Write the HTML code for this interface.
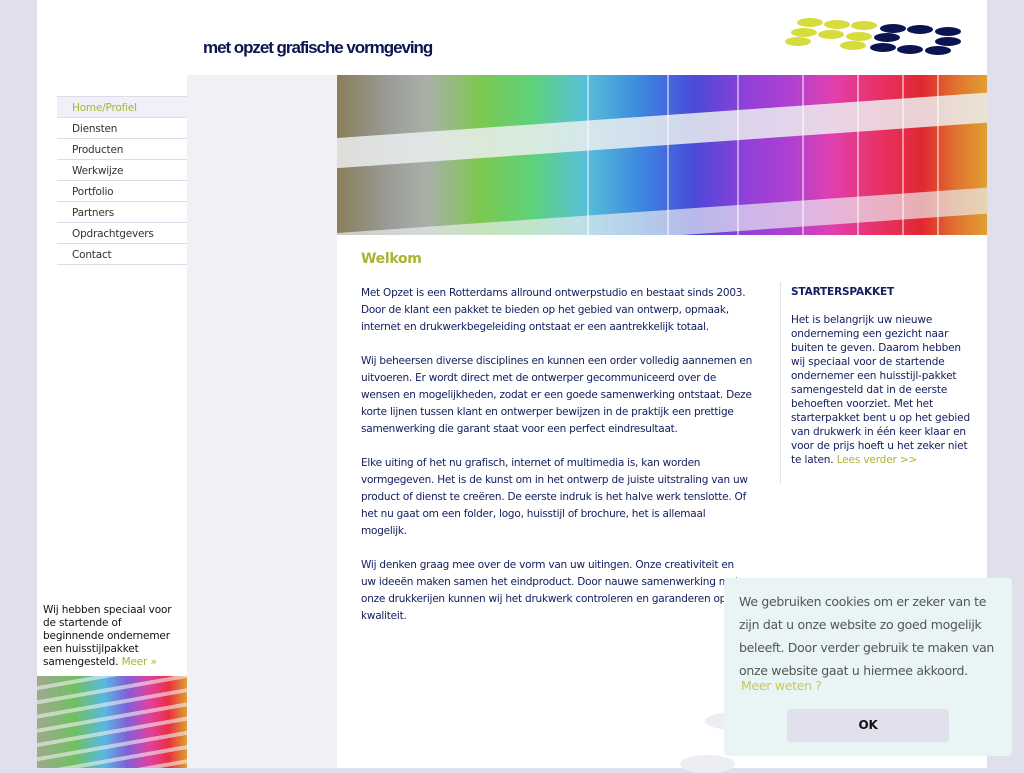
<!DOCTYPE html>
<html><head><meta charset="utf-8"><style>
*{margin:0;padding:0;box-sizing:border-box}
body{width:1024px;height:768px;overflow:hidden;background:#dfe0ec;font-family:"DejaVu Sans",Verdana,sans-serif;position:relative}
#page{position:absolute;left:37px;top:0;width:950px;height:768px;background:#fff}
.abs{position:absolute}
#tag{left:203px;top:38px;font-family:"Liberation Sans",sans-serif;font-weight:bold;font-size:17px;color:#0d1450;letter-spacing:-1.05px}
.dot{position:absolute;width:26px;height:9px;border-radius:50%}
.y{background:#d6dc3c}.n{background:#0a1450}
#mid{left:187px;top:75px;width:150px;height:693px;background:#f0f1f7}
#nav{left:57px;top:96px;width:130px;border-top:1px solid #dcdcea}
#nav div{height:21px;border-bottom:1px solid #dcdcea;font-size:10.5px;line-height:22px;padding-left:15px;color:#333;letter-spacing:-0.2px}
#nav div.on{background:#f0f1f7;color:#a8b434}
#hero{left:337px;top:75px;width:650px;height:160px;overflow:hidden;background:linear-gradient(90deg,#8a7d58 0%,#9a9c98 8%,#aab0a8 14%,#7cc850 22%,#5ed27a 30%,#58c0d8 38%,#3d86e0 47%,#4a4ad8 55%,#9040d8 63%,#b040d0 70%,#e040b0 76%,#e83060 84%,#e02830 90%,#e07030 95%,#e0a030 100%)}
.band{position:absolute;left:-20px;width:700px;background:rgba(235,238,240,.85);transform:rotate(-4deg)}
#hero .s{position:absolute;top:0;height:160px;width:2px;background:rgba(255,255,255,.5)}
h1{position:absolute;left:361px;top:251px;font-size:14px;color:#a8b434;font-weight:bold;letter-spacing:-0.3px}
#main{left:361px;top:285px;width:392px;font-size:10.5px;line-height:17px;color:#142060;letter-spacing:-0.23px}
#main p{margin-bottom:17px}
#side{left:780px;top:283px;width:196px;border-left:1px dotted #ccc;padding-left:10px;font-size:10.5px;line-height:14px;color:#142060;letter-spacing:-0.15px;padding-bottom:16px}
#side b{display:block;margin-bottom:14px;margin-top:2px}
.g{color:#a8b434}
#promo{left:43px;top:604px;width:134px;font-size:10.5px;line-height:13px;color:#111;letter-spacing:-0.15px}
#pimg{left:37px;top:676px;width:150px;height:92px;background:linear-gradient(90deg,#a0a890,#70c060 25%,#58b8e0 45%,#8060d8 60%,#e040a0 75%,#e83040 88%,#e0a030)}
#pimg:after{content:"";position:absolute;inset:0;background:repeating-linear-gradient(170deg,rgba(255,255,255,0) 0 10px,rgba(240,240,240,.6) 10px 14px)}
#cookie{left:724px;top:578px;width:288px;height:178px;background:#e9f4f5;border-radius:4px;font-size:12.5px;line-height:23px;color:#555;letter-spacing:-0.3px}
#cookie .t{position:absolute;left:15px;top:12px;width:268px}
#cookie .m{position:absolute;left:17px;top:96px;color:#c8c85a}
#cookie .ok{position:absolute;left:63px;top:131px;width:162px;height:33px;background:#dfe0ec;border-radius:4px;text-align:center;line-height:33px;font-weight:bold;color:#111;font-size:12px}
.gb{position:absolute;background:#eceef3;border-radius:50%}
</style></head><body>
<div id="page"></div>
<div class="abs" id="tag">met opzet grafische vormgeving</div>
<div class="dot y" style="left:797px;top:18px"></div><div class="dot y" style="left:824px;top:20px"></div><div class="dot y" style="left:851px;top:21px"></div>
<div class="dot n" style="left:880px;top:24px"></div><div class="dot n" style="left:907px;top:25px"></div><div class="dot n" style="left:935px;top:27px"></div>
<div class="dot y" style="left:791px;top:28px"></div><div class="dot y" style="left:818px;top:30px"></div><div class="dot y" style="left:846px;top:32px"></div>
<div class="dot n" style="left:874px;top:33px"></div><div class="dot n" style="left:935px;top:37px"></div>
<div class="dot y" style="left:785px;top:37px"></div><div class="dot y" style="left:840px;top:41px"></div>
<div class="dot n" style="left:870px;top:43px"></div><div class="dot n" style="left:897px;top:45px"></div><div class="dot n" style="left:925px;top:46px"></div>
<div class="abs" id="mid"></div>
<div class="abs" id="nav"><div class="on">Home/Profiel</div><div>Diensten</div><div>Producten</div><div>Werkwijze</div><div>Portfolio</div><div>Partners</div><div>Opdrachtgevers</div><div>Contact</div></div>
<div class="abs" id="hero">
<div class="band" style="top:40px;height:30px"></div>
<div class="band" style="top:135px;height:26px;opacity:.8"></div>
<div class="s" style="left:250px"></div><div class="s" style="left:330px"></div><div class="s" style="left:400px"></div><div class="s" style="left:465px"></div><div class="s" style="left:520px"></div><div class="s" style="left:565px"></div><div class="s" style="left:600px"></div>
</div>
<h1>Welkom</h1>
<div class="abs" id="main">
<p>Met Opzet is een Rotterdams allround ontwerpstudio en bestaat sinds 2003. Door de klant een pakket te bieden op het gebied van ontwerp, opmaak, internet en drukwerkbegeleiding ontstaat er een aantrekkelijk totaal.</p>
<p>Wij beheersen diverse disciplines en kunnen een order volledig aannemen en uitvoeren. Er wordt direct met de ontwerper gecommuniceerd over de wensen en mogelijkheden, zodat er een goede samenwerking ontstaat. Deze korte lijnen tussen klant en ontwerper bewijzen in de praktijk een prettige samenwerking die garant staat voor een perfect eindresultaat.</p>
<p>Elke uiting of het nu grafisch, internet of multimedia is, kan worden vormgegeven. Het is de kunst om in het ontwerp de juiste uitstraling van uw product of dienst te creëren. De eerste indruk is het halve werk tenslotte. Of het nu gaat om een folder, logo, huisstijl of brochure, het is allemaal mogelijk.</p>
<p>Wij denken graag mee over de vorm van uw uitingen. Onze creativiteit en<br>uw ideeën maken samen het eindproduct. Door nauwe samenwerking met<br>onze drukkerijen kunnen wij het drukwerk controleren en garanderen op<br>kwaliteit.</p>
</div>
<div class="abs" id="side"><b>STARTERSPAKKET</b>Het is belangrijk uw nieuwe onderneming een gezicht naar buiten te geven. Daarom hebben wij speciaal voor de startende ondernemer een huisstijl-pakket samengesteld dat in de eerste behoeften voorziet. Met het starterpakket bent u op het gebied van drukwerk in één keer klaar en voor de prijs hoeft u het zeker niet te laten. <span class="g">Lees verder &gt;&gt;</span></div>
<div class="abs" id="promo">Wij hebben speciaal voor de startende of beginnende ondernemer een huisstijlpakket samengesteld. <span class="g">Meer »</span></div>
<div class="abs" id="pimg"></div>
<div class="gb" style="left:705px;top:712px;width:60px;height:18px"></div>
<div class="gb" style="left:680px;top:755px;width:55px;height:18px"></div>
<div class="abs" id="cookie"><div class="t">We gebruiken cookies om er zeker van te zijn dat u onze website zo goed mogelijk beleeft. Door verder gebruik te maken van onze website gaat u hiermee akkoord.</div><div class="m">Meer weten ?</div><div class="ok">OK</div></div>
</body></html>
